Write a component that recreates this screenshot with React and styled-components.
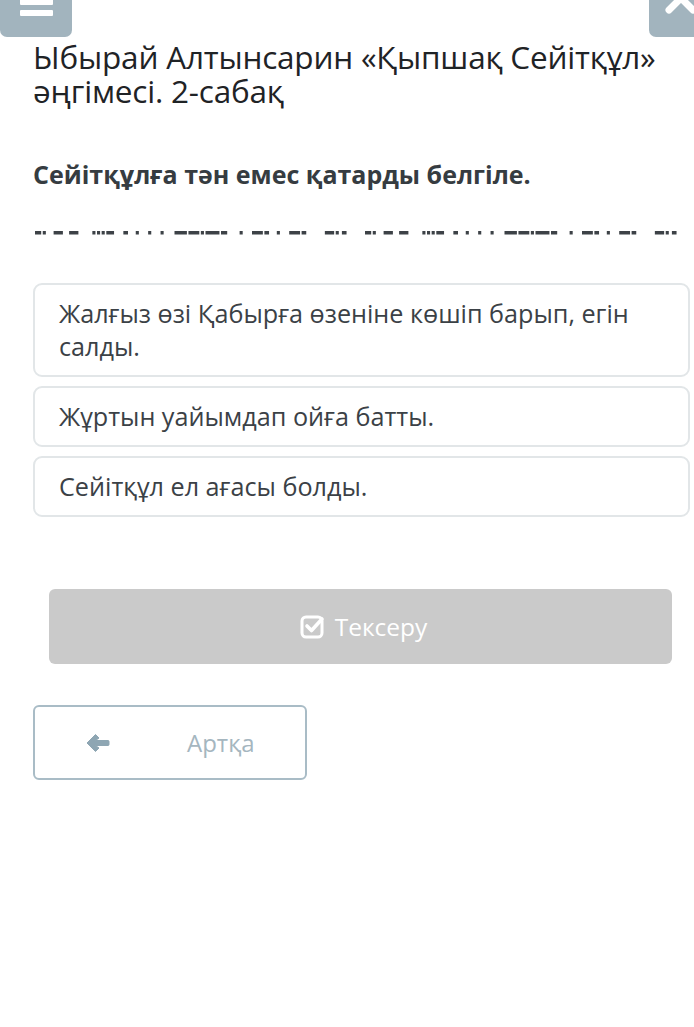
import React from "react";
import styled, { createGlobalStyle } from "styled-components";

const Global = createGlobalStyle`
  html, body {
    margin: 0;
    padding: 0;
    background: #fff;
    font-family: "Open Sans", "Noto Sans", sans-serif;
  }
`;

const Page = styled.div`
  width: 694px;
  height: 1027px;
  overflow: hidden;
  background: #fff;
`;

const TopBar = styled.div`
  display: flex;
  justify-content: space-between;
  align-items: flex-end;
  height: 37px;
  overflow: hidden;
`;

const NavButton = styled.div`
  width: ${p => p.w}px;
  height: 60px;
  flex: none;
  background: #a2b4be;
  border-radius: 0 0 7px 7px;
  display: flex;
  align-items: flex-end;
  justify-content: ${p => (p.right ? "flex-start" : "center")};
  padding-bottom: 21px;
  box-sizing: border-box;
  margin-right: ${p => (p.right ? "-17px" : "0")};
`;

const Bars = styled.div`
  display: flex;
  flex-direction: column;
  gap: 5px;
  width: 33px;

  span {
    display: block;
    height: 6px;
    background: #fff;
    border-radius: 1px;
  }
`;

const Content = styled.div`
  padding: 0 4px 0 33px;
`;

const Title = styled.h1`
  margin: 3px 0 0;
  font-size: 31.5px;
  line-height: 34px;
  font-weight: 400;
  color: #1f2326;
  letter-spacing: -0.2px;
`;

const Question = styled.h2`
  margin: 50px 0 0;
  font-size: 25px;
  line-height: 32px;
  font-weight: 700;
  color: #363c41;
`;

const Blanks = styled.svg`
  display: block;
  margin-top: 41px;
`;

const Options = styled.div`
  margin-top: 48px;
  display: flex;
  flex-direction: column;
  gap: 9px;
`;

const Option = styled.div`
  border: 2px solid #e2e6e8;
  border-radius: 9px;
  padding: 12px 24px;
  font-size: 25.2px;
  line-height: 33px;
  color: #3b4146;
  background: #fff;
`;

const CheckButton = styled.div`
  margin: 72px 18px 0 16px;
  height: 75px;
  border-radius: 6px;
  background: #cacaca;
  color: #fff;
  display: flex;
  align-items: center;
  justify-content: center;
  gap: 10px;
  font-size: 24.5px;
  padding-left: 6px;
`;

const BackButton = styled.div`
  margin-top: 41px;
  width: 274px;
  height: 75px;
  box-sizing: border-box;
  border: 2px solid #a9bcc6;
  border-radius: 6px;
  display: flex;
  align-items: center;
  padding-left: 50px;
  color: #a5b6bf;
  font-size: 24px;
`;

const BackLabel = styled.span`
  margin-left: 76px;
`;

// dark blanks standing in for the hidden answer text
const dashGroup = [
  [0, 4], [5, 2], [12, 6], [22, 6],
  [37, 2], [40, 2], [43, 2], [46, 5],
  [57, 3], [65, 2], [73, 2], [81, 2],
  [90, 8], [99, 7], [107, 2], [110, 9], [120, 4],
  [132, 2], [140, 7], [148, 3],
  [156, 2], [164, 7], [172, 3],
  [187, 6], [194, 2], [198, 3],
];

const BlankLine = () => {
  const k = 1.55;
  const rects = [];
  [0, 330].forEach((off, g) => {
    dashGroup.forEach(([x, w], i) => {
      rects.push(
        <rect key={g + "-" + i} x={x * k + off + 2} y={0} width={w * k} height={3.5} fill="#3d4247" />
      );
    });
  });
  return (
    <Blanks width="661" height="4" viewBox="0 0 661 4">
      {rects}
    </Blanks>
  );
};

const CheckIcon = () => (
  <svg width="25" height="25" viewBox="0 0 25 25">
    <rect x="2" y="3" width="20" height="20" rx="4" fill="none" stroke="#fff" strokeWidth="3" />
    <path d="M7 12 L11.5 16.5 L22 5" fill="none" stroke="#fff" strokeWidth="3.6" strokeLinecap="round" strokeLinejoin="round" />
  </svg>
);

const ArrowIcon = () => (
  <svg width="26" height="22" viewBox="0 0 26 22">
    <path
      d="M2 11 L10.5 2.5 L14 6 L10.5 8.5 L23 8.5 Q24 8.5 24 9.5 L24 12.5 Q24 13.5 23 13.5 L10.5 13.5 L14 16 L10.5 19.5 Z"
      fill="#8ea6b3"
      stroke="#8ea6b3"
      strokeWidth="1"
      strokeLinejoin="round"
    />
  </svg>
);

const CloseIcon = () => (
  <svg width="36" height="36" viewBox="0 0 36 36" style={{ marginLeft: 14 }}>
    <path d="M6 6 L30 30 M30 6 L6 30" stroke="#fff" strokeWidth="7" strokeLinecap="round" />
  </svg>
);

const options = [
  "Жалғыз өзі Қабырға өзеніне көшіп барып, егін салды.",
  "Жұртын уайымдап ойға батты.",
  "Сейітқұл ел ағасы болды.",
];

export default function App() {
  return (
    <Page>
      <Global />
      <TopBar>
        <NavButton w={72}>
          <Bars>
            <span />
            <span />
            <span />
          </Bars>
        </NavButton>
        <NavButton w={62} right>
          <CloseIcon />
        </NavButton>
      </TopBar>
      <Content>
        <Title>Ыбырай Алтынсарин «Қыпшақ Сейітқұл» әңгімесі. 2-сабақ</Title>
        <Question>Сейітқұлға тән емес қатарды белгіле.</Question>
        <BlankLine />
        <Options>
          {options.map(o => (
            <Option key={o}>{o}</Option>
          ))}
        </Options>
        <CheckButton>
          <CheckIcon />
          Тексеру
        </CheckButton>
        <BackButton>
          <ArrowIcon />
          <BackLabel>Артқа</BackLabel>
        </BackButton>
      </Content>
    </Page>
  );
}
